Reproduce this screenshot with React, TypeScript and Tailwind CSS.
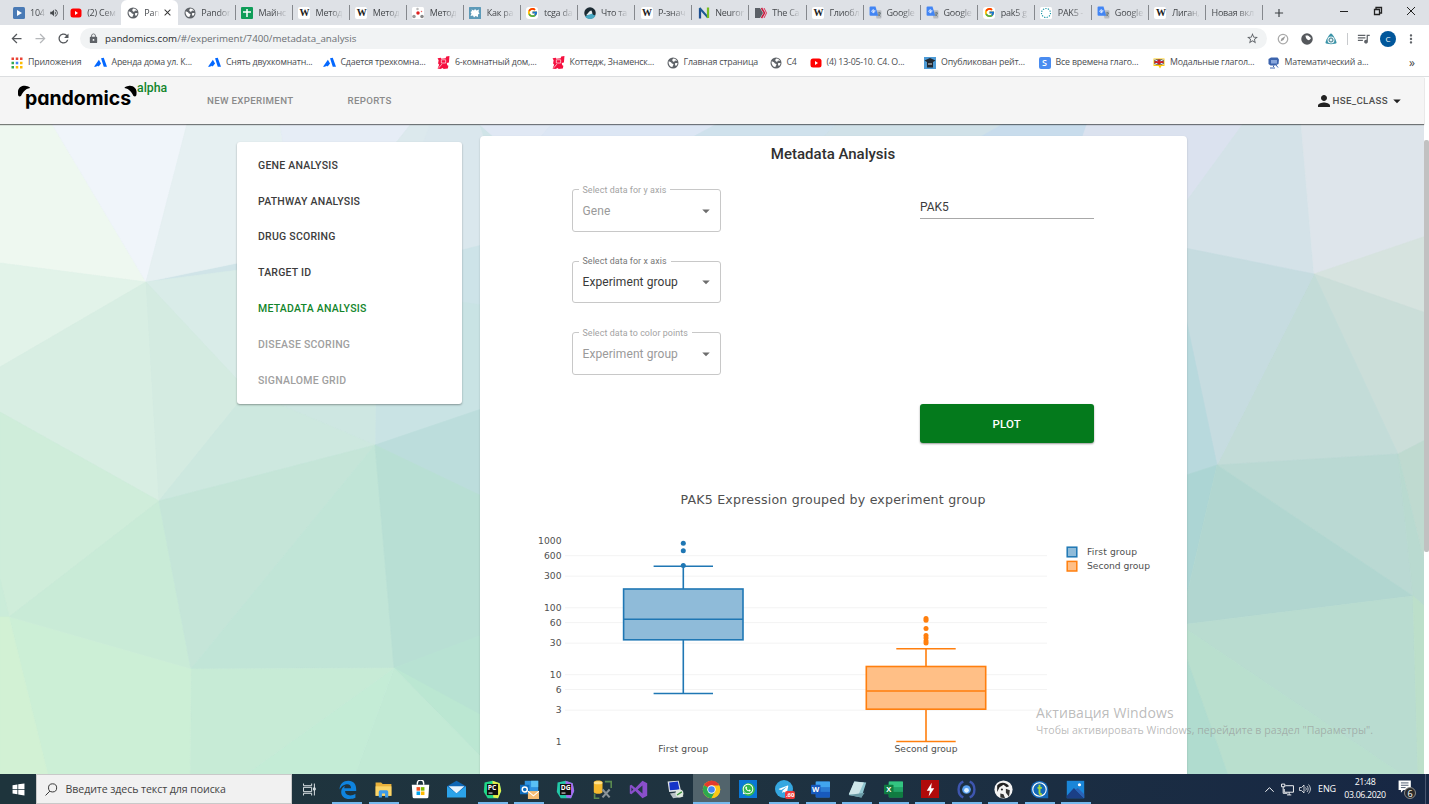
import React from "react";
import {
  MdPublic, MdLock, MdRefresh, MdArrowBack, MdArrowForward, MdStarBorder, MdQueueMusic,
  MdPerson, MdArrowDropDown, MdMoreVert, MdVolumeUp, MdClose, MdAdd,
} from "react-icons/md";
import { FcGoogle } from "react-icons/fc";
import { FaWhatsapp, FaTelegramPlane } from "react-icons/fa";

type P = { children?: React.ReactNode; className?: string };

const Ico = ({ children, className = "size-3" }: P) => (
  <svg viewBox="0 0 24 24" className={className + " shrink-0"}>{children}</svg>
);

const YouTube = () => (
  <Ico><rect x="1" y="3" width="22" height="18" rx="5" fill="#f00" /><path d="M10 8l6 4-6 4z" fill="#fff" /></Ico>
);
const Globe = () => (
  <Ico>
    <circle cx="12" cy="12" r="11" fill="#5f6368" />
    <path d="M3 9c3 0 5 1 6 3s4 1 4 3-2 2-2 5c-5 0-8-4-8-11zM13 3c3 0 6 2 7 5l-4-1-2 3-3-2c-1-2 0-4 2-5zM17 12h4c0 3-2 5-3 6-2-1-3-5-1-6z" fill="#fff" />
  </Ico>
);
const Wiki = () => (
  <span className="flex size-3 shrink-0 items-center justify-center rounded-[2px] bg-white font-['Liberation_Serif',serif] text-[10px] leading-none font-bold tracking-[-1px] text-[#222]">W</span>
);
const Translate = () => (
  <Ico className="size-[13px]">
    <path d="M10 8h11a2 2 0 012 2v11a2 2 0 01-2 2h-7z" fill="#b9bcc2" />
    <path d="M3 1h9l5 17H3a2 2 0 01-2-2V3a2 2 0 012-2z" fill="#4285f4" />
    <path d="M12 9H8v2h2a2.500 2.500 0 11-.5-3.300" fill="none" stroke="#fff" strokeWidth="1.600" />
    <path d="M16 13h6m-3-2v2m2 0c-.5 3-2 4-4 5m0-3l4 4" stroke="#566" fill="none" strokeWidth="1.300" />
  </Ico>
);

const favicons: Record<string, React.ReactNode> = {
  play: <Ico><rect width="24" height="24" rx="3" fill="#4a7ab5" /><path d="M8 6l10 6-10 6z" fill="#fff" /></Ico>,
  yt: <YouTube />,
  globe: <Globe />,
  sheet: <Ico><rect width="24" height="24" rx="2" fill="#0f9d58" /><path d="M12 4v16M4 10h16" stroke="#fff" strokeWidth="3" /></Ico>,
  wiki: <Wiki />,
  dots: (
    <Ico><rect width="24" height="24" rx="3" fill="#fff" /><circle cx="11" cy="4" r="2.500" fill="#bbb" /><circle cx="12" cy="12" r="3.500" fill="#e02020" />
      <circle cx="4" cy="19" r="3.500" fill="#999" /><circle cx="20" cy="19" r="3.500" fill="#888" /><circle cx="19" cy="9" r="1.500" fill="#e66" /></Ico>
  ),
  star: <Ico><rect width="24" height="24" rx="1" fill="#5d9ab8" /><path d="M5 5l5 2 2-3 3 3 5-2-1 5 2 3-3 2 0 5-5-2-3 3-2-4-5 1 2-5-2-3 3-2z" fill="#fff" /></Ico>,
  google: <span className="flex size-3 shrink-0 items-center justify-center rounded-[3px] bg-white"><FcGoogle className="size-[11px]" /></span>,
  sphere: <Ico><circle cx="12" cy="12" r="11.500" fill="#1c2b33" /><path d="M2 19c6-1 5-8 10-8s5 6 11 6c-2 5-6 7-11 7S4 22 2 19z" fill="#48a9c4" /><path d="M3 17C8 15 9 8 15 7l2 6-6 2z" fill="#e9eff2" /></Ico>,
  n: <Ico><path d="M4 23V3" stroke="#1d4f91" strokeWidth="4.500" /><path d="M3 2l17 19" stroke="#1d5a91" strokeWidth="4" /><path d="M20 1v21" stroke="#78be20" strokeWidth="4.500" /></Ico>,
  cancer: <Ico><path d="M0 2h10l6 10-6 10H0z" fill="#5b6067" /><path d="M13 2l6 10-6 10" stroke="#c8193c" strokeWidth="3" fill="none" /><path d="M18 2l5 10-5 10" stroke="#e0355a" strokeWidth="2" fill="none" /></Ico>,
  tr: <Translate />,
  ring: <Ico><rect width="24" height="24" rx="3" fill="#fff" /><circle cx="12" cy="12" r="9" fill="none" stroke="#1795a5" strokeWidth="2.200" strokeDasharray="2.500 2.500" /></Ico>,
};

const tabs: [string, string][] = [
  ["play", "104"], ["yt", "(2) Сем"], ["globe", "Pan"], ["globe", "Pandor"], ["sheet", "Майнс"], ["wiki", "Метод"],
  ["wiki", "Метод"], ["dots", "Метод"], ["star", "Как ра"], ["google", "tcga da"], ["sphere", "Что та"], ["wiki", "Р-знач"],
  ["n", "Neuror"], ["cancer", "The Ca"], ["wiki", "Глиобл"], ["tr", "Google"], ["tr", "Google"], ["google", "pak5 g"],
  ["ring", "PAK5 -"], ["tr", "Google"], ["wiki", "Лиган,"], ["", "Новая вкл"],
];

const fade = "[mask-image:linear-gradient(to_right,black_55%,rgba(0,0,0,0.1))]";

const Tab = ({ icon, title, i }: { icon: string; title: string; i: number }) => {
  const active = i === 2;
  return (
    <div className={"relative flex h-full w-[57.100px] shrink-0 items-center pl-[5.400px] " + (active ? "rounded-t-[6px] bg-white" : i !== 1 ? "after:absolute after:right-0 after:top-[5px] after:h-[15px] after:w-px after:bg-[#85888d]" : "")}>
      {icon && favicons[icon]}
      <span className={"whitespace-nowrap text-[9px] tracking-[-0.250px] text-[#45484c] " + (icon ? (icon === "tr" ? "ml-[4.500px] " : "ml-[5.500px] ") : "") + fade}>{title}</span>
      {i === 0 && <MdVolumeUp className="ml-[4px] size-[10px] shrink-0 text-[#45484c]" />}
      {active && <MdClose className="ml-[3px] size-[11px] shrink-0 text-[#333]" />}
    </div>
  );
};

const Avito = () => <Ico className="size-[13px]"><path d="M0 20l9-13 4 7-4 5H7l-1-1-2 2zM13 4l5-1 6 17h-6z" fill="#0468ff" /></Ico>;
const Pink = () => <Ico className="size-[13px]"><path d="M1 4l6-1 1 2 8-1 1-3 6-1-1 12-4 1 1 4 2 1-1 5-8 1-1-2-5 2-5-1 3-7-2-2 1-6z" fill="#f5103f" /><path d="M8 7h8v6H8z" fill="none" stroke="#fff" strokeWidth="1.200" /><path d="M3 22l6-7" stroke="#fff" strokeWidth="1.200" /></Ico>;

const bookmarks: [React.ReactNode, string, string][] = [
  [<Ico>{[["#ea4335", "#ea4335", "#ea4335"], ["#34a853", "#4285f4", "#fbbc04"], ["#34a853", "#fbbc04", "#fbbc04"]].map((r, y) => r.map((c, x) => <rect key={`${x}${y}`} x={1 + x * 8.500} y={1 + y * 8.500} width="5" height="5" fill={c} />))}</Ico>, "Приложения", "w-[82.500px]"],
  [<Avito />, "Аренда дома ул. К...", "w-[114.500px]"],
  [<Avito />, "Снять двухкомнатн...", "w-[114.500px]"],
  [<Avito />, "Сдается трехкомна...", "w-[114.500px]"],
  [<Pink />, "6-комнатный дом,...", "w-[114.500px]"],
  [<Pink />, "Коттедж, Знаменск...", "w-[115px]"],
  [<Globe />, "Главная страница", "w-[103px]"],
  [<Globe />, "C4", "w-[40px]"],
  [<YouTube />, "(4) 13-05-10. C4. О...", "w-[114.500px]"],
  [<Ico><rect width="24" height="24" fill="#4d9bd6" /><path d="M1 7l11-5 11 5-5 3v11H6V10z" fill="#222a33" /><path d="M8 13h8v2H8z" fill="#ddd" /></Ico>, "Опубликован рейт...", "w-[114.500px]"],
  [<span className="flex size-3 items-center justify-center rounded-[2px] bg-[#4a8cf0] text-[9px] font-semibold tracking-normal text-white">S</span>, "Все времена глаго...", "w-[114.500px]"],
  [<Ico><path d="M1 3h22v15h-6l-3 5-3-5H1z" fill="#fdc90f" /><rect x="3" y="5" width="18" height="10" fill="#27408b" /><path d="M3 5l18 10M21 5L3 15" stroke="#fff" strokeWidth="2" /><path d="M12 5v10M3 10h18" stroke="#d92020" strokeWidth="3.500" /></Ico>, "Модальные глагол...", "w-[114.500px]"],
  [<Ico><path d="M1 4l5-3h13l3 4-1 9-7 3H5L1 14z" fill="#3c64ad" /><path d="M6 6h12v7H6z" fill="#88a6dc" /><path d="M11 17v3M16 16l4 5M4 22h10" stroke="#3c64ad" strokeWidth="2" /></Ico>, "Математический а...", "w-[114.500px]"],
];

const polys: [string, string][] = [
  ["0,124 52,124 146,282 0,263", "#eef8f0"],
  ["52,124 187,124 146,282", "#f0f5fa"],
  ["187,124 280,124 300,250 146,282", "#e6f0f2"],
  ["280,124 411,124 350,200 300,250", "#e6edf6"],
  ["411,124 430,124 400,262 300,262", "#dce9ed"],
  ["430,124 479,124 520,250 462,250 375,272", "#dae7ed"],
  ["479,124 552,124 520,160", "#e0e8f4"],
  ["552,124 717,124 650,160 520,160", "#dce6f4"],
  ["717,124 837,124 800,160 650,160", "#cfe1ec"],
  ["837,124 1003,124 940,160 800,160", "#d0e1e8"],
  ["1003,124 1087,124 1087,160 940,160", "#c8dcec"],
  ["1087,124 1243,124 1187,202 1060,202", "#dbe2ef"],
  ["1243,124 1301,124 1314,274 1180,247 1180,210", "#d4e2e8"],
  ["1301,124 1429,124 1429,235 1314,274", "#dee5eb"],
  ["1314,274 1429,235 1429,314", "#d6e3df"],
  ["1314,274 1429,314 1429,438 1398,454", "#cbded9"],
  ["1314,274 1398,454 1217,465", "#c3dcd8"],
  ["1180,247 1314,274 1217,465 1180,300", "#c6dce0"],
  ["1180,290 1217,465 1180,477", "#b8d9dd"],
  ["1180,477 1217,465 1180,625", "#acd5d4"],
  ["1217,465 1398,454 1413,596", "#bad9d3"],
  ["1217,465 1413,596 1180,625", "#b1d6d0"],
  ["1398,454 1429,438 1429,582", "#bfdad0"],
  ["1398,454 1429,582 1429,610 1413,596", "#b9dad0"],
  ["1180,625 1413,596 1418,775 1403,775", "#b9dcd0"],
  ["1413,596 1429,610 1429,775 1418,775", "#bcdfca"],
  ["1180,625 1403,775 1228,775 1180,640", "#b9dfce"],
  ["1180,640 1228,775 1180,775", "#b0dccf"],
  ["146,282 300,262 400,262 375,340 248,391", "#d9ece8"],
  ["375,272 490,243 490,306 377,340", "#cde3e8"],
  ["377,290 490,306 490,408 375,445", "#c9e3e4"],
  ["248,391 377,290 375,445", "#cee7e2"],
  ["0,263 146,282 0,367", "#e2f3e9"],
  ["0,367 146,282 159,501 0,412", "#d8eee3"],
  ["146,282 248,391 159,501", "#d4ebe1"],
  ["159,501 248,391 375,445", "#cde8df"],
  ["0,412 159,501 9,617 0,579", "#cfedda"],
  ["0,579 9,617 0,617", "#cbecd9"],
  ["9,617 159,501 191,669", "#c9ebd7"],
  ["159,501 375,445 191,669", "#c5e5d8"],
  ["375,445 394,668 191,669", "#c1e5d7"],
  ["375,445 490,406 490,503", "#bcdddc"],
  ["375,445 490,500 490,634 394,668", "#b8dfd4"],
  ["394,668 490,632 490,722", "#b8e2d3"],
  ["394,668 490,720 490,766", "#bbe7d2"],
  ["394,668 490,766 490,775 355,775", "#c2ead5"],
  ["394,668 355,775 245,775", "#c4ecd6"],
  ["191,669 394,668 245,775 190,775", "#c7ebd6"],
  ["9,617 191,669 190,775 48,775", "#ccefd6"],
  ["0,617 9,617 48,775 0,775", "#d2f1d4"],
];

const nav: [string, string][] = [
  ["GENE ANALYSIS", "text-[#3c3c3c]"], ["PATHWAY ANALYSIS", "text-[#3c3c3c]"], ["DRUG SCORING", "text-[#3c3c3c]"], ["TARGET ID", "text-[#3c3c3c]"],
  ["METADATA ANALYSIS", "text-[#12852b]"], ["DISEASE SCORING", "text-[#a0a0a0]"], ["SIGNALOME GRID", "text-[#a0a0a0]"],
];

const Select = ({ label, value, on }: { label: string; value: string; on?: boolean }) => (
  <fieldset className="-mt-[5px] h-[47px] w-[149px] rounded-[3px] border border-[#c8c8c8]">
    <legend className={"ml-[6px] h-[10px] px-[4px] text-[8.900px] leading-[10px] tracking-[0.080px] whitespace-nowrap " + (on ? "text-[#777]" : "text-[#a3a3a3]")}>{label}</legend>
    <div className={"flex h-[32px] items-center justify-between pr-[5px] pl-[10px] text-[12px] tracking-[0.080px] " + (on ? "text-[#3a3a3a]" : "text-[#9a9a9a]")}>
      <span>{value}</span>
      <MdArrowDropDown className="size-[18px] text-[#6d6d6d]" />
    </div>
  </fieldset>
);

const ticks: [string, number][] = [["1000", 541], ["600", 555.700], ["300", 576.200], ["100", 607.800], ["60", 622.600], ["30", 643.200], ["10", 674.700], ["6", 689.500], ["3", 710.200], ["1", 742]];

const Box = ({ c, x, top, q3, med, q1, low, pts, f }: { c: string; x: number; top: number; q3: number; med: number; q1: number; low: number; pts: number[]; f: string }) => (
  <g stroke={c} strokeWidth="1.600">
    <rect x={x - 59.700} y={q3} width="119.400" height={q1 - q3} fill={f} />
    <path d={`M${x - 59.700} ${med}h119.400M${x} ${q3}V${top}M${x} ${q1}V${low}M${x - 29.700} ${top}h59.400M${x - 29.700} ${low}h59.400`} fill="none" />
    {pts.map((p) => <circle key={p} cx={x} cy={p} r="2.500" fill={c} stroke="none" />)}
  </g>
);

const Chart = () => (
  <svg viewBox="480 474 706 300" className="block h-[300px] w-[706px] shrink-0 font-['DejaVu_Sans',Verdana,sans-serif]" fill="#505050">
    <text x="833" y="504" textAnchor="middle" fontSize="12.600" textLength="305">PAK5 Expression grouped by experiment group</text>
    {ticks.map(([t, y], i) => (
      <g key={t}>
        {i > 0 && i < 9 && <path d={`M565 ${y}H1047`} stroke="#f3f3f3" />}
        <text x="561.500" y={y + 3} textAnchor="end" fontSize="9.200">{t}</text>
      </g>
    ))}
    <Box c="#1f77b4" f="#8fbbd9" x={683.300} top={566.300} q3={589} med={619.200} q1={639.800} low={693.500} pts={[543.300, 550.800, 565.500]} />
    <Box c="#ff7f0e" f="#ffbf86" x={926} top={648.800} q3={666.500} med={691} q1={709.200} low={741.500} pts={[618.600, 620.200, 628.400, 635.500, 638, 641, 643]} />
    <text x="683.300" y="752" textAnchor="middle" fontSize="9.200" textLength="50">First group</text>
    <text x="926" y="752" textAnchor="middle" fontSize="9.200" textLength="63">Second group</text>
    <rect x="1067.200" y="547.200" width="9.600" height="9.600" fill="#8fbbd9" stroke="#1f77b4" strokeWidth="1.500" />
    <rect x="1067.200" y="561.400" width="9.600" height="9.600" fill="#ffbf86" stroke="#ff7f0e" strokeWidth="1.500" />
    <text x="1087" y="555" fontSize="9.200" textLength="50">First group</text>
    <text x="1087" y="569.300" fontSize="9.200" textLength="63">Second group</text>
  </svg>
);

const big = "size-[19px]";
const JB = ({ t, a, b }: { t: string; a: string; b: string }) => (
  <Ico className={big}>
    <path d="M2 3l10-2 9 3 2 10-4 9H6L1 15z" fill={a} /><path d="M12 1l9 3 2 10-4 9-6-1z" fill={b} />
    <rect x="5" y="5" width="14" height="14" fill="#111" />
    <text x="6" y="13" fontSize="8.500" fontWeight="700" fill="#fff" fontFamily="Open Sans">{t}</text><path d="M7 16.500h5" stroke="#fff" strokeWidth="1.200" />
  </Ico>
);
const Office = ({ t, a, b, c }: { t: string; a: string; b: string; c: string }) => (
  <Ico className={big}>
    <rect x="6" y="2" width="18" height="20" rx="1.500" fill={a} /><rect x="6" y="2" width="18" height="7" fill={c} /><path d="M6 15h18v7H6z" fill={b} />
    <rect x="0" y="6" width="12" height="12" rx="1" fill={b} /><text x="6" y="15.300" textAnchor="middle" fontSize="9.500" fontWeight="700" fill="#fff" fontFamily="Open Sans">{t}</text>
  </Ico>
);

const apps: [React.ReactNode, boolean][] = [
  [<Ico className={big}><path d="M2 12C2 5 7 1 13 1c7 0 10 5 10 11v2H9c0 4 3 5.500 6.500 5.500 2.500 0 4.500-.7 6.500-2v5c-2 1-4.500 1.500-7.500 1.500C8 24 4 20 4 15c0-4 2.500-6.500 5-7.500C8 8.500 8 10 8 10.500h8.500C16.500 7 14.500 5.500 12 5.500c-5 0-8 3-10 6.500z" fill="#0f83dd" /></Ico>, true],
  [<Ico className={big}><path d="M2 3h7l2 2h11v15H2z" fill="#e9b13b" /><path d="M2 8h20v12H2z" fill="#fbd568" /><path d="M6 22v-7a2 2 0 012-2h8a2 2 0 012 2v7h-4v-5h-4v5z" fill="#3d9be9" /></Ico>, true],
  [<Ico className={big}><path d="M8 6V4a4 4 0 018 0v2" fill="none" stroke="#fff" strokeWidth="1.800" /><path d="M1 6h22l-1 15a2 2 0 01-2 2H4a2 2 0 01-2-2z" fill="#fff" /><path d="M7 9h4.500v4.500H7z" fill="#f25022" /><path d="M12.500 9H17v4.500h-4.500z" fill="#7fba00" /><path d="M7 14.500h4.500V19H7z" fill="#00a4ef" /><path d="M12.500 14.500H17V19h-4.500z" fill="#ffb900" /></Ico>, false],
  [<Ico className={big}><path d="M0 8l12-7 12 7v13H0z" fill="#1067b4" /><path d="M2 8h20l-10 9z" fill="#e9f4fd" /><path d="M0 8l12 9 12-9v14H0z" fill="#2ba3ea" /></Ico>, false],
  [<JB t="PC" a="#21d789" b="#e8ee4a" />, true],
  [<Ico className={big}><rect x="6" y="1" width="17" height="16" fill="#2f93e0" /><path d="M14 1h9v8h-9z" fill="#5ac1f5" /><rect y="6" width="12" height="12" fill="#0f6cbd" /><circle cx="6" cy="12" r="3.200" fill="none" stroke="#fff" strokeWidth="1.800" /><rect x="10" y="14" width="14" height="10" fill="#f6bd74" /><path d="M10 14l7 6 7-6" stroke="#fff" fill="none" strokeWidth="1.300" /></Ico>, true],
  [<JB t="DG" a="#22c8a8" b="#a76bf0" />, false],
  [<Ico className={big}><path d="M1 3c0-3 11-3 11 0v12c0 3-11 3-11 0z" fill="#f5b92e" /><ellipse cx="6.500" cy="3.500" rx="5.500" ry="2" fill="#ffe08a" /><path d="M15 2h8v8M2 17v6h6" stroke="#5a8a50" strokeWidth="2" fill="none" /><path d="M12 12l9 10M21 12l-9 10" stroke="#8b9499" strokeWidth="2.600" /></Ico>, false],
  [<Ico className={big}><path d="M17 1l6 3v16l-6 3L8 14l-5 4-2-1V7l2-1 5 4z" fill="#8a4fcb" /><path d="M17 7v10l-6-5zM3 9.500v5L5.500 12z" fill="#233a45" /></Ico>, false],
  [<Ico className={big}><path d="M2 2l14-1 3 13-15 1z" fill="#e2e6ea" /><path d="M4 3l11-1 2 10-12 1z" fill="#1534c8" /><path d="M5 17l12-2 5 6-13 2z" fill="#b9c1c7" /><circle cx="17" cy="17" r="5" fill="#dfe9df" /><path d="M14 19l6-4" stroke="#3b8f3b" strokeWidth="1.600" /></Ico>, false],
  [<Ico className={big}><circle cx="12" cy="12" r="11" fill="#fbc816" /><path d="M12 12L2.500 6.500A11 11 0 0121.500 6.500z" fill="#e33b2e" /><path d="M12 1a11 11 0 019.500 5.500H12z" fill="#e33b2e" /><path d="M2.500 6.500A11 11 0 0012 23l4.500-8.500L12 12z" fill="#2da94f" /><path d="M12 7h9.800A11 11 0 0112 23l4.500-8z" fill="#fbc816" /><circle cx="12" cy="12" r="5.300" fill="#fff" /><circle cx="12" cy="12" r="4.200" fill="#4285f4" /></Ico>, true],
  [<span className="flex size-[18px] items-center justify-center bg-[#0a78d7] text-white"><span className="flex size-[13px] items-center justify-center rounded-full bg-[#35b94c]"><FaWhatsapp className="size-[12px]" /></span></span>, false],
  [<span className="relative flex size-[18px] items-center justify-center rounded-full bg-[#35a7e0] text-white"><FaTelegramPlane className="mr-0.5 size-[11px]" /><span className="absolute -right-[2px] -bottom-[1px] rounded-[2px] bg-[#ef3b3b] px-px text-[6px] leading-[8px] font-bold">.60</span></span>, true],
  [<Office t="W" a="#2b7cd3" b="#185abd" c="#41a5ee" />, true],
  [<Ico className={big}><path d="M8 2l15 1-6 19-16-3z" fill="#8fc5cf" /><path d="M8 2l12 1-7 16-12-1z" fill="#cfe7ea" /><path d="M1 19l16 3 4-6" fill="#6a9aa5" /></Ico>, true],
  [<Office t="X" a="#21a366" b="#107c41" c="#33c481" />, true],
  [<span className="flex size-[18px] items-center justify-center bg-[#b00a0a]"><Ico className="size-[15px]"><path d="M14 1L6 14h5l-2 9 9-13h-5z" fill="#fff" /></Ico></span>, true],
  [<Ico className={big}><circle cx="12" cy="12" r="5.500" fill="#5aa0f0" /><circle cx="12" cy="13" r="3" fill="#dcefff" /><path d="M8 2C0 5 0 19 8 22M16 2c8 3 8 17 0 20" stroke="#3e56b0" strokeWidth="3" fill="none" /></Ico>, true],
  [<Ico className={big}><circle cx="12" cy="12" r="11.500" fill="#f4f4f4" /><path d="M4 7c3-5 12-5 15 1l-3 1-4-3-5 3-3 6z" fill="#222" /><circle cx="10" cy="12" r="1.400" fill="#222" /><path d="M15 11l5 2-1 8-4-5zM8 17l4 1 2 5-6-1z" fill="#333" /></Ico>, true],
  [<Ico className={big}><path d="M12 1a11 11 0 0111 11v11H12A11 11 0 0112 1z" fill="#1368b8" /><circle cx="12" cy="12" r="8.500" fill="none" stroke="#fff" strokeWidth="1.400" /><path d="M12 6v10c0 1.500 1 2 3 2M9.500 10H15" stroke="#a5d93b" strokeWidth="2.400" fill="none" /></Ico>, true],
  [<Ico className={big}><rect x="1" y="1" width="22" height="22" fill="#1a86d8" /><path d="M1 20l9-10 13 13H1z" fill="#1b3f86" /><path d="M12 12l3-2 8 8v5z" fill="#2b62b6" /><circle cx="17" cy="6" r="2" fill="#fff" /></Ico>, true],
];

export default function App() {
  return (
    <div className="relative flex h-[804px] w-[1429px] flex-col overflow-hidden bg-white font-['Open_Sans','Noto_Sans',sans-serif]">
      <div className="flex h-[25px] shrink-0 items-center bg-[#dee1e6] pl-[7.200px]">
        {tabs.map(([icon, t], i) => <Tab key={i} icon={icon} title={t} i={i} />)}
        <MdAdd className="ml-[9px] size-[14px] text-[#3c4043]" />
        <div className="ml-auto flex items-center pr-[13px] pb-[3px]">
          <svg viewBox="0 0 80 12" className="h-3 w-[80px]" fill="none" stroke="#222" strokeWidth="1">
            <path d="M4 6.500h8M71 2l8 8M79 2l-8 8" /><path d="M38.500 4.500h5v5h-5zM40 4V2.500h5.500v5.500H44" strokeWidth="1.300" />
          </svg>
        </div>
      </div>

      <div className="flex h-[26px] shrink-0 items-center bg-white pt-[1px]">
        <MdArrowBack className="ml-[9px] size-[15px] text-[#55585c]" />
        <MdArrowForward className="ml-[9px] size-[15px] text-[#b5b7ba]" />
        <MdRefresh className="ml-[8px] size-[15px] text-[#55585c]" />
        <div className="ml-[9px] flex h-[21px] w-[1187px] items-center rounded-full bg-[#f1f3f4] pr-[8px] pl-[8px]">
          <MdLock className="size-[11px] text-[#5f6368]" />
          <span className="ml-[6px] pt-px text-[9.750px] text-[#6b6f73]"><span className="text-[#2a2c2f]">pandomics.com</span>/#/experiment/7400/metadata_analysis</span>
          <MdStarBorder className="ml-auto size-[13px] text-[#5f6368]" />
        </div>
        <div className="ml-[10px] flex items-center">
          <Ico className="size-[12px]"><circle cx="12" cy="12" r="9.500" fill="none" stroke="#aaa" strokeWidth="2.500" /><path d="M7 17l2-6 8-5-4 8z" fill="#999" /></Ico>
          <Ico className="ml-[12px] size-[12px]"><circle cx="12" cy="12" r="11.500" fill="#55585c" /><path d="M9 5h5l6 5c-1 3-4 5-6 4-3-1-5-5-5-9z" fill="#fff" /></Ico>
          <Ico className="ml-[12px] size-[12px]"><path d="M12 1c3 0 12 16 11 19s-21 3-22 0S9 1 12 1z" fill="#3a93a8" /><circle cx="12" cy="14" r="7" fill="#e6f3f6" /><circle cx="12" cy="14" r="4" fill="none" stroke="#3b7989" strokeWidth="2" /></Ico>
          <span className="ml-[10px] h-3 w-px bg-[#c8cacd]" />
          <MdQueueMusic className="ml-[8px] size-[15px] text-[#5f6368]" />
          <span className="ml-[9px] flex size-[16px] items-center justify-center rounded-full bg-[#01579b] text-[8px] text-white">C</span>
          <MdMoreVert className="ml-[8px] size-[14px] text-[#5f6368]" />
        </div>
      </div>

      <div className="flex h-[26px] shrink-0 items-center border-b border-[#dcdee0] bg-white pb-[2px] pl-[11px]">
        {bookmarks.map(([icon, t, w]) => (
          <div key={t} className={"flex shrink-0 items-center text-[8.800px] tracking-[-0.180px] whitespace-nowrap text-[#4a4d51] " + w}>
            {icon}<span className="ml-[5px]">{t}</span>
          </div>
        ))}
        <span className="ml-auto pr-[14px] text-[12px] leading-none text-[#444]">»</span>
      </div>

      <div className="relative flex h-[697px] shrink-0 font-[Roboto,sans-serif]">
        <div className="flex w-[1424px] flex-col">
          <header className="relative z-10 flex h-[47px] shrink-0 items-center bg-[#f5f5f5] shadow-[0_1px_1px_rgba(0,0,0,0.5)]">
            <div className="relative ml-[18px] flex h-full w-[150px] items-start">
              <svg viewBox="0 0 120 14" className="absolute top-[8px] left-0 h-[14px] w-[120px]" fill="#000">
                <path d="M0 9C-1 3 4 0 8 1c2 0 4 1 4 2-5 1-7 4-9 8C1 12 0 11 0 9z" /><path d="M118.500 9c1-6-4-9-8-8-2 0-4 1-4 2 5 1 7 4 9 8 2 1 3 0 3-2z" />
              </svg>
              <span className="mt-[9px] ml-[7px] font-[Inter,sans-serif] text-[19.500px] leading-[24px] font-bold tracking-[-0.050px] text-black [font-feature-settings:'cv11']">pandomics</span>
              <span className="absolute top-[2px] left-[119px] text-[12.300px] leading-[18px] font-medium text-[#12852b]">alpha</span>
            </div>
            <span className="ml-[39px] w-[140.500px] pt-px text-[9.700px] font-medium tracking-[0.320px] text-[#8b8b8b]">NEW EXPERIMENT</span>
            <span className="pt-px text-[9.700px] font-medium tracking-[0.320px] text-[#8b8b8b]">REPORTS</span>
            <div className="ml-auto flex items-center pt-px pr-[18px] text-[9.700px] font-medium tracking-[0.350px] text-[#505050]">
              <MdPerson className="size-[18px] text-[#222]" />HSE_CLASS<MdArrowDropDown className="size-[18px] text-[#222]" />
            </div>
          </header>
          <main className="relative flex flex-1 items-start overflow-hidden">
            <svg viewBox="0 124 1424 650" preserveAspectRatio="none" className="absolute inset-0 h-[650px] w-[1424px] bg-[#d0e4e8]">
              {polys.map(([p, c]) => <polygon key={p} points={p} fill={c} stroke={c} strokeWidth="0.600" />)}
            </svg>
            <nav className="relative mt-[18px] ml-[237px] flex h-[262px] w-[225px] flex-col rounded-[3px] bg-white pt-[5.800px] pl-[21px] shadow-[0_1px_2px_rgba(0,0,0,0.35)]">
              {nav.map(([t, c]) => <span key={t} className={"flex h-[35.800px] shrink-0 items-center text-[10.500px] font-medium tracking-[0.240px] " + c}>{t}</span>)}
            </nav>
            <section className="relative mt-[12px] ml-[17.500px] flex h-[640px] w-[707px] flex-col rounded-t-[4px] bg-white shadow-[0_1px_2px_rgba(0,0,0,0.2)]">
              <h1 className="mt-[7px] h-[46.700px] shrink-0 text-center text-[15px] leading-[22px] font-medium text-[#303030]">Metadata Analysis</h1>
              <div className="flex h-[284.300px] shrink-0 pl-[92px]">
                <div className="flex w-[348.500px] flex-col gap-[29.500px]">
                  <Select label="Select data for y axis" value="Gene" />
                  <Select label="Select data for x axis" value="Experiment group" on />
                  <Select label="Select data to color points" value="Experiment group" />
                </div>
                <div className="flex w-[173.500px] flex-col">
                  <div className="mt-[5px] h-[24.500px] border-b border-[#a8a8a8] pt-[3px] text-[12px] leading-[18px] text-[#3c3c3c]">PAK5</div>
                  <button className="mt-[185px] h-[39px] rounded-[3px] bg-[#047a1c] pt-px text-[11.500px] font-medium tracking-[0.200px] text-white shadow-[0_1px_2px_rgba(0,0,0,0.4)]">PLOT</button>
                </div>
              </div>
              <Chart />
            </section>
          </main>
        </div>
        <div className="w-[5px] bg-white pt-[63px]"><div className="h-[412px] w-[5px] rounded-[2px] bg-[#c1c1c1]" /></div>
      </div>

      <div className="pointer-events-none absolute top-[703px] left-[1036px] whitespace-nowrap text-[#969696]/65">
        <div className="text-[14px] leading-[20px] tracking-[0.100px]">Активация Windows</div>
        <div className="text-[10.600px] leading-[15px]">Чтобы активировать Windows, перейдите в раздел "Параметры".</div>
      </div>

      <footer className="flex h-[30px] shrink-0 items-stretch bg-linear-to-r from-[#1e343c] via-[#1f3340] to-[#172744]">
        <div className="flex w-[36px] items-center justify-center"><Ico className="size-[13px]"><path d="M1 4l9-1.300V11H1zM11.500 2.500L23 1v10H11.500zM1 12.500h9v8.300L1 19.500zM11.500 12.500H23v10.500l-11.500-1.600z" fill="#fff" /></Ico></div>
        <div className="flex w-[255.500px] items-center border border-[#c9c9c9] bg-[#f1f1f1] pl-[8px] text-[10.600px] tracking-[-0.080px] text-[#444]">
          <Ico className="size-[13px]"><circle cx="14" cy="9" r="7.500" fill="none" stroke="#333" strokeWidth="1.800" /><path d="M9 15l-8 8" stroke="#333" strokeWidth="1.800" /></Ico>
          <span className="ml-[7.500px] pt-px">Введите здесь текст для поиска</span>
        </div>
        <div className="flex w-[37.500px] items-center justify-center pr-[2px]"><Ico className="size-[13px]"><path d="M1 1v4h15V1M1 23v-4h15v4M1 8h15v8H1zM21 1v22M19.500 9h3v4h-3z" fill="none" stroke="#dfe5e8" strokeWidth="1.800" /></Ico></div>
        {apps.map(([icon, on], i) => (
          <div key={i} className={"relative flex w-[36.450px] shrink-0 items-center justify-center " + (i === 10 ? "bg-[#52646c] " : "")}>
            {icon}
            {on && <span className={"absolute bottom-0 h-[2px] bg-[#76b9ed] " + (i === 10 ? "w-full" : "w-[30px]")} />}
          </div>
        ))}
        <div className="ml-auto flex items-center text-[9px] text-white">
          <Ico className="size-[9px]"><path d="M1 18L12 7l11 11" fill="none" stroke="#fff" strokeWidth="2.600" /></Ico>
          <Ico className="ml-[7px] size-[13px]"><path d="M8 5h15v12H6v-6M1 2h6v5H1zM4 7v12h8M11 22h8M15 17v5" fill="none" stroke="#fff" strokeWidth="1.700" /></Ico>
          <Ico className="ml-[5px] size-[12px]"><path d="M1 9h4l5-5v16l-5-5H1zM13 9c2 2 2 4 0 6M16 6c3 4 3 8 0 12M19 3c5 6 5 12 0 18" fill="none" stroke="#fff" strokeWidth="1.500" /></Ico>
          <span className="ml-[7px] w-[18px] tracking-[-0.100px]">ENG</span>
          <div className="ml-[8px] w-[42px] text-center text-[8.800px] leading-[13px] tracking-[-0.350px]"><div>21:48</div><div className="whitespace-nowrap">03.06.2020</div></div>
          <div className="relative mr-[9px] ml-[12px] size-[18px]">
            <Ico className="size-[14px]"><path d="M1 1h21v16H9l-4 5v-5H1z" fill="#fff" /><path d="M5 5h13M5 9h13M5 13h8" stroke="#1a2c45" strokeWidth="1.300" /></Ico>
            <span className="absolute right-0 bottom-[-1px] flex size-[12px] items-center justify-center rounded-full border border-[#8a8a8a] bg-[#2b2b2b] text-[9px] leading-none">6</span>
          </div>
          <span className="h-full w-px bg-[#4a5670]" /><span className="w-[3px]" />
        </div>
      </footer>
    </div>
  );
}
